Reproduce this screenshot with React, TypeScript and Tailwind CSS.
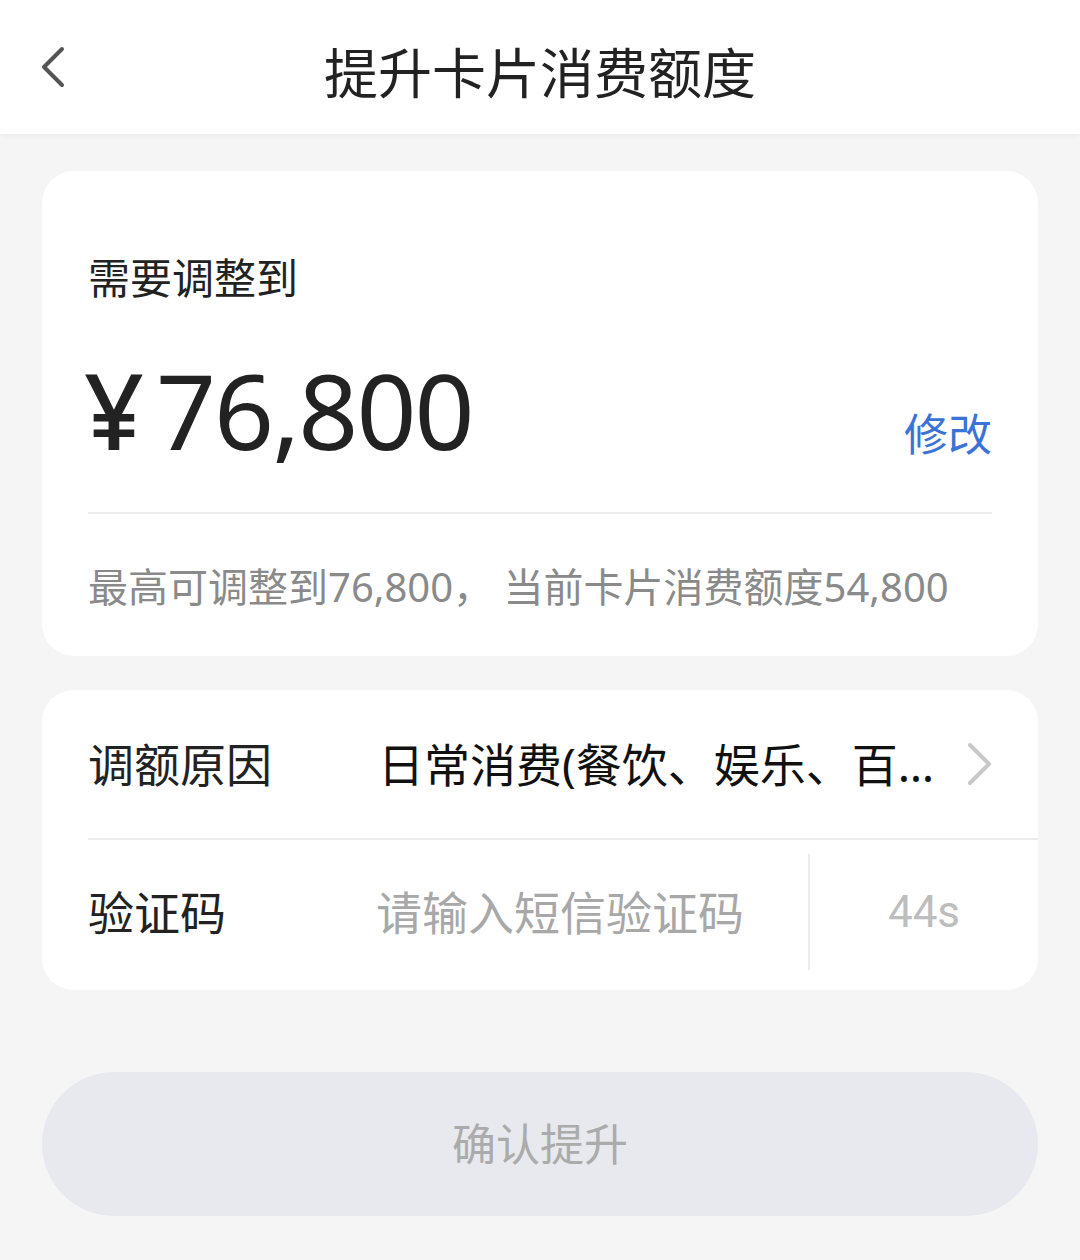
import React from "react";

const font = "font-['Noto_Sans','Noto_Sans_CJK_SC',sans-serif]";

const BackIcon = () => (
  <svg width="30" height="44" viewBox="0 0 30 44" fill="none">
    <path d="M24 4 L6 22 L24 40" stroke="#555" strokeWidth="4" strokeLinecap="round" strokeLinejoin="round" />
  </svg>
);

const ChevronRight = () => (
  <svg width="28" height="44" viewBox="0 0 28 44" fill="none">
    <path d="M5 3 L24 22 L5 41" stroke="#c8c8c8" strokeWidth="4" strokeLinecap="round" strokeLinejoin="round" />
  </svg>
);

export default function App() {
  return (
    <div className={`${font} w-[1080px] h-[1260px] bg-[#f5f5f5] text-[#222]`}>
      <header className="h-[134px] bg-white grid grid-cols-[1fr_auto_1fr] items-center shadow-[0_2px_6px_rgba(0,0,0,0.04)]">
        <div className="pl-[38px] flex items-center">
          <BackIcon />
        </div>
        <h1 className="mt-[11px] text-[54px] leading-[54px] text-[#222]">提升卡片消费额度</h1>
        <div />
      </header>

      <section className="mx-[42px] mt-[37px] rounded-[32px] bg-white px-[46px] pt-[86px] pb-[49px]">
        <p className="text-[42px] leading-[42px] text-[#222]">需要调整到</p>
        <div className="mt-[58px] flex justify-between items-end">
          <div className="flex text-[105px] leading-[105px] text-[#222] font-['Noto_Sans',sans-serif]">
            <span className="-ml-[4px] font-medium">¥</span>
            <span className="ml-[12px] tracking-[-2px]">76,800</span>
          </div>
          <button className="text-[44px] leading-[44px] text-[#3b72d6] mb-[6px]">修改</button>
        </div>
        <div className="mt-[50px] h-[2px] bg-[#ececec]" />
        <p className="mt-[53px] text-[40px] leading-[40px] text-[#8a8a8a] whitespace-nowrap">
          最高可调整到76,800， 当前卡片消费额度54,800
        </p>
      </section>

      <section className="mx-[42px] mt-[34px] rounded-[32px] bg-white">
        <div className="h-[148px] flex items-center pl-[46px] pr-[45px]">
          <span className="w-[290px] text-[46px] leading-[46px] text-[#222]">调额原因</span>
          <span className="text-[46px] leading-[46px] text-[#111] whitespace-nowrap">日常消费(餐饮、娱乐、百…</span>
          <span className="ml-auto flex items-center">
            <ChevronRight />
          </span>
        </div>
        <div className="ml-[46px] h-[2px] bg-[#ececec]" />
        <div className="h-[150px] flex items-center pl-[46px]">
          <span className="w-[288px] -mt-[6px] text-[46px] leading-[46px] text-[#222]">验证码</span>
          <span className="w-[432px] -mt-[6px] text-[46px] leading-[46px] text-[#a8a8a8]">请输入短信验证码</span>
          <div className="h-full pt-[14px] pb-[20px] flex">
            <div className="w-[2px] bg-[#ececec]" />
          </div>
          <span className="flex-1 -mt-[6px] text-center text-[44px] leading-[44px] text-[#bdbdbd] font-['Roboto','Noto_Sans',sans-serif]">
            44s
          </span>
        </div>
      </section>

      <div className="mx-[42px] mt-[82px]">
        <button className="w-full h-[144px] rounded-full bg-[#e8e9ee] text-[44px] leading-[44px] text-[#ababab]">
          确认提升
        </button>
      </div>
    </div>
  );
}
